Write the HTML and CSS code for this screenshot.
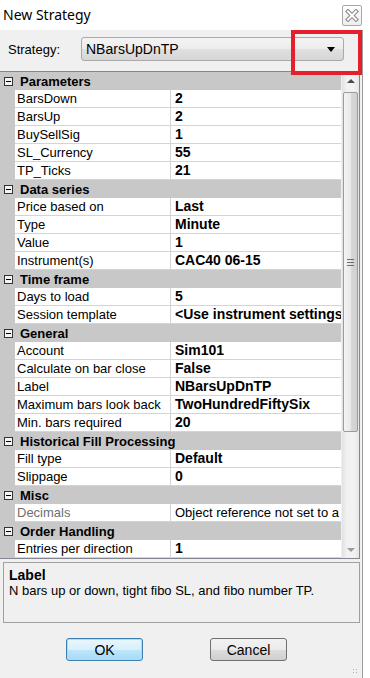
FILE: index.html
```html
<!DOCTYPE html>
<html>
  <head>
    <title>New Strategy</title>
    <link rel="stylesheet" href="styles.css">
  </head>
  <body>
    <div class="dialog">
      <div class="titlebar">
        <span class="title">New Strategy</span>
        <button class="close">
          <svg width="14" height="13" viewBox="0 0 14 13">
            <path d="M3 2.5 L11 10.5 M11 2.5 L3 10.5" stroke="#8c8c8c" stroke-width="4.2" stroke-linecap="square" fill="none" />
            <path d="M3 2.5 L11 10.5 M11 2.5 L3 10.5" stroke="#fff" stroke-width="2" stroke-linecap="square" fill="none" />
          </svg>
        </button>
      </div>

      <div class="panel">
        <div class="strategy-row">
          <label>Strategy:</label>
          <div class="combo">
            <span>NBarsUpDnTP</span>
            <span class="arrow"></span>
          </div>
        </div>

        <div class="grid">
          <div class="rows">
            <div class="cat"><span class="toggle"></span>Parameters</div>
            <div class="prop"><span class="name">BarsDown</span><span class="val">2</span></div>
            <div class="prop"><span class="name">BarsUp</span><span class="val">2</span></div>
            <div class="prop"><span class="name">BuySellSig</span><span class="val">1</span></div>
            <div class="prop"><span class="name">SL_Currency</span><span class="val">55</span></div>
            <div class="prop"><span class="name">TP_Ticks</span><span class="val">21</span></div>

            <div class="cat"><span class="toggle"></span>Data series</div>
            <div class="prop"><span class="name">Price based on</span><span class="val">Last</span></div>
            <div class="prop"><span class="name">Type</span><span class="val">Minute</span></div>
            <div class="prop"><span class="name">Value</span><span class="val">1</span></div>
            <div class="prop"><span class="name">Instrument(s)</span><span class="val">CAC40 06-15</span></div>

            <div class="cat"><span class="toggle"></span>Time frame</div>
            <div class="prop"><span class="name">Days to load</span><span class="val">5</span></div>
            <div class="prop"><span class="name">Session template</span><span class="val">&lt;Use instrument settings</span></div>

            <div class="cat"><span class="toggle"></span>General</div>
            <div class="prop"><span class="name">Account</span><span class="val">Sim101</span></div>
            <div class="prop"><span class="name">Calculate on bar close</span><span class="val">False</span></div>
            <div class="prop"><span class="name">Label</span><span class="val">NBarsUpDnTP</span></div>
            <div class="prop"><span class="name">Maximum bars look back</span><span class="val">TwoHundredFiftySix</span></div>
            <div class="prop"><span class="name">Min. bars required</span><span class="val">20</span></div>

            <div class="cat"><span class="toggle"></span>Historical Fill Processing</div>
            <div class="prop"><span class="name">Fill type</span><span class="val">Default</span></div>
            <div class="prop"><span class="name">Slippage</span><span class="val">0</span></div>

            <div class="cat"><span class="toggle"></span>Misc</div>
            <div class="prop disabled"><span class="name">Decimals</span><span class="val">Object reference not set to a</span></div>

            <div class="cat"><span class="toggle"></span>Order Handling</div>
            <div class="prop"><span class="name">Entries per direction</span><span class="val">1</span></div>
          </div>

          <div class="scrollbar">
            <div class="sb-btn"><span class="up"></span></div>
            <div class="track">
              <div class="thumb"><span class="grip"></span></div>
            </div>
            <div class="sb-btn"><span class="down"></span></div>
          </div>
        </div>

        <div class="desc">
          <div class="desc-title">Label</div>
          <div>N bars up or down, tight fibo SL, and fibo number TP.</div>
        </div>

        <div class="buttons">
          <button class="btn default">OK</button>
          <button class="btn">Cancel</button>
        </div>
      </div>

      <div class="highlight"></div>
      <div class="resize-grip"></div>
    </div>
  </body>
</html>
```

FILE: styles.css
```css
body {
  margin: 0;
  background-color: #fff;
  font-family: "Liberation Sans", Arial, sans-serif;
  color: #000;
}

.dialog {
  position: relative;
  width: 370px;
  height: 678px;
  background-color: #fff;
  overflow: hidden;
}

.titlebar {
  height: 30px;
  display: flex;
  align-items: center;
  justify-content: space-between;
  padding: 0 8px 0 3px;
}

.title {
  font-family: "Noto Sans", sans-serif;
  font-size: 14px;
  margin-top: -1px;
}

.close {
  width: 20px;
  height: 21px;
  padding: 0;
  margin-top: 1px;
  display: flex;
  align-items: center;
  justify-content: center;
  border: 1px solid #a8a8a8;
  border-radius: 2px;
  background: linear-gradient(#ffffff, #eeeeee);
}

.panel {
  width: 362px;
  height: 648px;
  background-color: #f0f0f0;
  border-right: 1px solid #9c9c9c;
}

/* strategy picker */
.strategy-row {
  display: flex;
  align-items: center;
  padding: 7px 0 0 8px;
  height: 24px;
}

.strategy-row label {
  width: 73px;
  font-size: 13px;
}

.combo {
  width: 263px;
  height: 24px;
  box-sizing: border-box;
  display: flex;
  align-items: center;
  justify-content: space-between;
  padding: 0 4px 0 4px;
  font-size: 14px;
  border: 1px solid #a9a9a9;
  border-radius: 3px;
  background: linear-gradient(#f4f4f4, #ececec 50%, #e0e0e0 51%, #d6d6d6);
}

.arrow {
  width: 0;
  height: 0;
  margin-right: 4px;
  border-top: 5px solid #000;
  border-left: 4px solid transparent;
  border-right: 4px solid transparent;
}

/* property grid */
.grid {
  margin-top: 10px;
  width: 360px;
  height: 488px;
  box-sizing: border-box;
  display: flex;
  border: 1px solid #828790;
  border-left: none;
}

.rows {
  width: 341px;
  height: 486px;
  overflow: hidden;
  background-color: #c8c8c8;
}

.cat {
  height: 18px;
  display: flex;
  align-items: center;
  padding-left: 4px;
  font-size: 13px;
  font-weight: bold;
}

.toggle {
  position: relative;
  width: 9px;
  height: 9px;
  box-sizing: border-box;
  margin-right: 7px;
  border: 1px solid #333;
  background-color: #f4f4f4;
}

.toggle::after {
  content: "";
  position: absolute;
  left: 1px;
  top: 3px;
  width: 5px;
  height: 1px;
  background-color: #000;
}

.prop {
  height: 18px;
  margin-left: 15px;
  display: grid;
  grid-template-columns: 156px 170px;
  background-color: #fff;
}

.prop span {
  height: 18px;
  box-sizing: border-box;
  line-height: 17px;
  white-space: nowrap;
  overflow: hidden;
  border-bottom: 1px solid #d4d4d4;
}

.name {
  padding-left: 2px;
  font-size: 13px;
  border-right: 1px solid #d4d4d4;
}

.val {
  padding-left: 4px;
  font-size: 14px;
  font-weight: bold;
}

.disabled .name {
  color: #707070;
}

.disabled .val {
  font-size: 13px;
  font-weight: normal;
}

/* scrollbar */
.scrollbar {
  width: 17px;
  margin-left: 1px;
  display: flex;
  flex-direction: column;
  background: linear-gradient(to right, #e2e2e2, #f2f2f2 30%, #f2f2f2 70%, #e6e6e6);
}

.sb-btn {
  height: 17px;
  display: flex;
  align-items: center;
  justify-content: center;
}

.up,
.down {
  width: 0;
  height: 0;
  border-left: 4px solid transparent;
  border-right: 4px solid transparent;
}

.up {
  border-bottom: 4px solid #4a4a4a;
}

.down {
  border-top: 4px solid #9a9a9a;
}

.track {
  flex: 1;
  padding-top: 3px;
}

.thumb {
  width: 15px;
  height: 340px;
  margin-left: 1px;
  box-sizing: border-box;
  display: flex;
  align-items: center;
  justify-content: center;
  border: 1px solid #9b9b9b;
  border-radius: 2px;
  background: linear-gradient(to right, #f4f4f4, #e8e8e8 50%, #d8d8d8 51%, #cfcfcf);
}

.grip {
  width: 7px;
  height: 7px;
  background: repeating-linear-gradient(#6e6e6e 0, #6e6e6e 1px, transparent 1px, transparent 3px);
}

/* description */
.desc {
  width: 357px;
  height: 61px;
  box-sizing: border-box;
  margin: 3px 0 0 3px;
  padding: 4px 5px;
  font-size: 13px;
  line-height: 16px;
  border: 1px solid #a0a0a0;
}

.desc-title {
  font-size: 14px;
  font-weight: bold;
}

/* buttons */
.buttons {
  display: flex;
  gap: 67px;
  margin-top: 15px;
  padding-left: 66px;
}

.btn {
  width: 77px;
  height: 23px;
  padding: 0;
  font-family: "Liberation Sans", Arial, sans-serif;
  font-size: 14px;
  color: #000;
  border: 1px solid #707070;
  border-radius: 3px;
  background: linear-gradient(#f2f2f2, #ebebeb 50%, #dddddd 51%, #cfcfcf);
}

.btn.default {
  border-color: #3c7fb1;
  box-shadow: inset 0 0 0 1px #a8dcf7;
  background: linear-gradient(#eaf6fd, #d9f0fc 50%, #bee6fd 51%, #a7d9f5);
}

/* red callout drawn over the dropdown */
.highlight {
  position: absolute;
  left: 291px;
  top: 30px;
  width: 71px;
  height: 45px;
  box-sizing: border-box;
  border: 4px solid #e3202b;
}

.resize-grip {
  position: absolute;
  right: 12px;
  bottom: 4px;
  width: 6px;
  height: 6px;
  background: radial-gradient(circle, #b0b0b0 0.8px, transparent 1px) 0 0 / 3px 3px;
}
```
